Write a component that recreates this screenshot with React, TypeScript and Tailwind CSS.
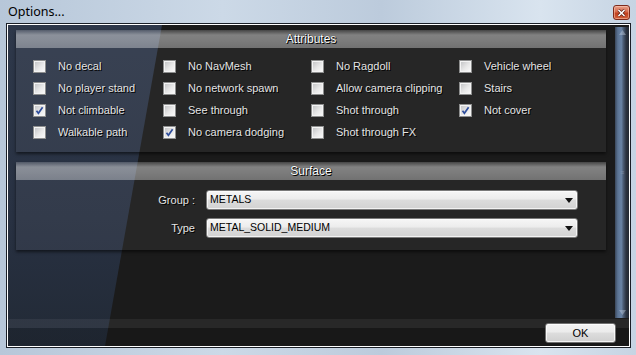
import { ReactNode } from 'react'

const attributes: { label: string; checked?: boolean }[] = [
  { label: 'No decal' },
  { label: 'No NavMesh' },
  { label: 'No Ragdoll' },
  { label: 'Vehicle wheel' },
  { label: 'No player stand' },
  { label: 'No network spawn' },
  { label: 'Allow camera clipping' },
  { label: 'Stairs' },
  { label: 'Not climbable', checked: true },
  { label: 'See through' },
  { label: 'Shot through' },
  { label: 'Not cover', checked: true },
  { label: 'Walkable path' },
  { label: 'No camera dodging', checked: true },
  { label: 'Shot through FX' },
]

function Checkbox({ checked }: { checked?: boolean }) {
  return (
    <span className="relative flex h-[13px] w-[13px] shrink-0 items-center justify-center border border-[#8e8f8f] bg-[linear-gradient(135deg,#bfc0c2,#e8e8e8_55%,#fbfbfb)] shadow-[inset_0_0_0_1px_#f4f4f4]">
      {checked && (
        <svg width="9" height="9" viewBox="0 0 9 9" className="absolute">
          <path d="M1.5 4.8 L3.4 7.3 L7.6 1.2" fill="none" stroke="#2f4e9c" strokeWidth="1.7" />
        </svg>
      )}
    </span>
  )
}

function Panel({ title, children }: { title: string; children: ReactNode }) {
  return (
    <div className="bg-white/[0.05] shadow-[0_2px_3px_rgba(0,0,0,0.55)]">
      <div className="flex h-[18px] items-center justify-center bg-[linear-gradient(to_bottom,rgba(255,255,255,0.14),rgba(255,255,255,0.42)_5px,rgba(255,255,255,0.40)_55%,rgba(255,255,255,0.35))] text-[12px] text-white [text-shadow:1px_1px_0_#000,0_0_1px_#000]">
        {title}
      </div>
      {children}
    </div>
  )
}

function Select({ value }: { value: string }) {
  return (
    <div className="flex h-[20px] items-center justify-between rounded-[3px] border border-[#7a7a7a] bg-[linear-gradient(to_bottom,#f6f6f6,#ececec_45%,#dcdcdc_50%,#d2d2d2)] pl-[3px] pr-[4px] text-[10.5px] text-black shadow-[inset_0_0_0_1px_rgba(255,255,255,0.7)]">
      <span>{value}</span>
      <svg width="8" height="5" viewBox="0 0 8 5">
        <path d="M0 0 H8 L4 5 Z" fill="#111" />
      </svg>
    </div>
  )
}

export default function App() {
  return (
    <div className="flex h-[355px] w-[636px] flex-col bg-[linear-gradient(to_right,#b7c7d9,#ccd9e7_35%,#bccbdc_60%,#d9e4ef_85%,#c6d4e3)] font-['Liberation_Sans',Arial,sans-serif]">
      {/* title bar */}
      <div className="flex h-[23px] shrink-0 items-start justify-between pl-[8px] pr-[6px]">
        <span className="mt-[3px] font-['Noto_Sans',sans-serif] text-[12.5px] leading-[17px] text-black">Options...</span>
        <button className="mt-[5px] flex h-[15px] w-[17px] items-center justify-center rounded-[3px] border border-[#7d2a1c] bg-[linear-gradient(to_bottom,#e8a08a,#d6694b_45%,#c2401f_55%,#d0603c)] shadow-[inset_0_0_0_1px_rgba(255,210,190,0.5)]">
          <svg width="9" height="8" viewBox="0 0 9 8">
            <path d="M1.5 1 L7.5 7 M7.5 1 L1.5 7" stroke="#5a1d12" strokeWidth="3" />
            <path d="M1.5 1 L7.5 7 M7.5 1 L1.5 7" stroke="#fff" strokeWidth="1.6" />
          </svg>
        </button>
      </div>

      {/* window frame */}
      <div className="flex min-h-0 flex-1 pb-[7px] pl-[6px] pr-[5px]">
        <div className="flex flex-1 border border-[#1a1f27]">
          <div className="flex flex-1 border border-white">
            <div className="relative flex flex-1 flex-col overflow-hidden bg-[#1b1b1b]">
              {/* slanted blue backdrop */}
              <div className="absolute inset-0 bg-[linear-gradient(to_bottom,#2e384a,#283142_60%,#222a36)] [clip-path:polygon(0_0,154px_0,97px_100%,0_100%)]" />

              <div className="relative flex min-h-0 flex-1">
                <div className="flex w-[598px] flex-col gap-[10px] pl-[8px] pt-[5px]">
                  <Panel title="Attributes">
                    <div className="grid grid-cols-[130px_148px_148px_1fr] pb-[9px] pl-[17px] pt-[7px]">
                      {attributes.map((a) => (
                        <label key={a.label} className="flex h-[22px] items-center gap-[12px] text-[11px] text-[#e4e4e4] [text-shadow:1px_1px_0_#000]">
                          <Checkbox checked={a.checked} />
                          <span className="whitespace-nowrap">{a.label}</span>
                        </label>
                      ))}
                    </div>
                  </Panel>
                  <Panel title="Surface">
                    <div className="grid grid-cols-[179px_372px] items-center gap-x-[11px] gap-y-[8px] pb-[12px] pt-[10px]">
                      <span className="text-right text-[11px] text-[#e4e4e4] [text-shadow:1px_1px_0_#000]">Group :</span>
                      <Select value="METALS" />
                      <span className="text-right text-[11px] text-[#e4e4e4] [text-shadow:1px_1px_0_#000]">Type</span>
                      <Select value="METAL_SOLID_MEDIUM" />
                    </div>
                  </Panel>
                </div>

                {/* scrollbar */}
                <div className="ml-auto mb-[1px] mt-[2px] flex w-[14px] flex-col items-center justify-between bg-[linear-gradient(to_right,#3a475b,#5b7393_20%,#6a84a6_45%,#4a5b73_60%,#2b3340_80%,#232933)] py-[3px]">
                  <svg width="7" height="5" viewBox="0 0 7 5" className="opacity-40">
                    <path d="M0 5 L3.5 0 L7 5 Z" fill="#c8d4e4" />
                  </svg>
                  <span className="text-[7px] leading-[7px] text-[#8a9bb2] opacity-70">≡</span>
                  <svg width="7" height="5" viewBox="0 0 7 5" className="opacity-40">
                    <path d="M0 0 L7 0 L3.5 5 Z" fill="#c8d4e4" />
                  </svg>
                </div>
              </div>

              {/* footer */}
              <div className="relative flex h-[27px] shrink-0 items-center justify-end bg-[linear-gradient(to_bottom,rgba(255,255,255,0.06)_0,rgba(255,255,255,0.06)_9px,rgba(0,0,0,0.12)_9px)] pr-[13px] pt-[1px]">
                <button className="flex h-[20px] w-[71px] items-center justify-center rounded-[3px] border border-[#707070] bg-[linear-gradient(to_bottom,#f3f3f3,#ebebeb_45%,#dddddd_50%,#cfcfcf)] text-[11px] text-black shadow-[inset_0_0_0_1px_rgba(255,255,255,0.75)]">
                  OK
                </button>
              </div>
            </div>
          </div>
        </div>
      </div>
    </div>
  )
}
